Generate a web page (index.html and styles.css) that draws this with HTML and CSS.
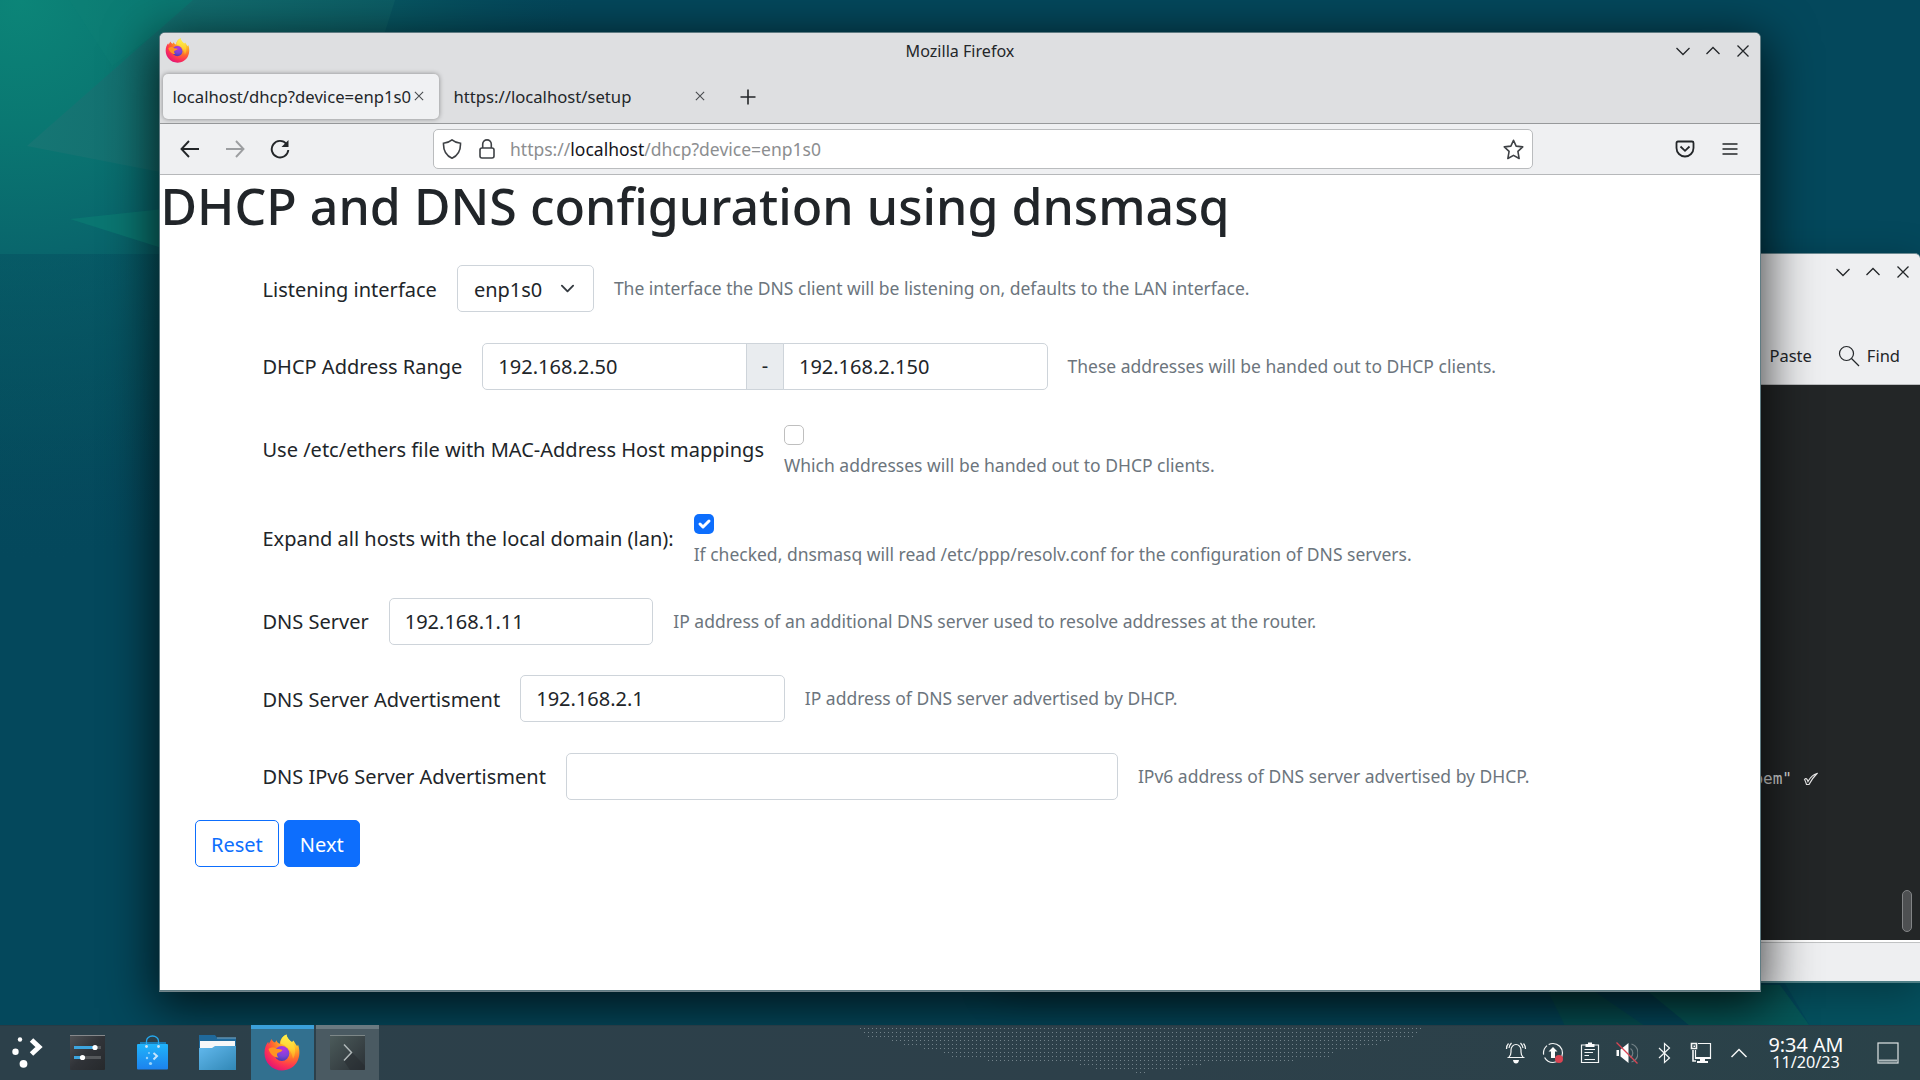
FILE: index.html
```html
<!DOCTYPE html>
<html lang="en">
<head>
<meta charset="utf-8">
<title>Mozilla Firefox</title>
<link rel="stylesheet" href="styles.css">
</head>
<body>
<svg width="0" height="0" class="defs">
  <defs>
    <radialGradient id="ffBody" cx="0.78" cy="0.12" r="1"><stop offset="0" stop-color="#fff44f"/><stop offset=".3" stop-color="#ffb625"/><stop offset=".55" stop-color="#ff6d2d"/><stop offset=".75" stop-color="#ff3750"/><stop offset="1" stop-color="#e0107a"/></radialGradient>
    <radialGradient id="ffGlobe" cx=".6" cy=".2" r=".8"><stop offset="0" stop-color="#b833e1"/><stop offset=".6" stop-color="#7a44d8"/><stop offset="1" stop-color="#4a3bb0"/></radialGradient>
    <linearGradient id="ffFlame" x1="0" y1="0" x2="0" y2="1"><stop offset="0" stop-color="#fff44f"/><stop offset=".6" stop-color="#ffd232"/><stop offset="1" stop-color="#ff9a1f"/></linearGradient>
    <symbol id="firefox" viewBox="0 0 36 37">
      <path fill="url(#ffBody)" d="M7.500 5C8.300 7 9.500 8 11 8.600L12.500 6.200C13 8 14 9.200 16 9.800C16 6 18 2.500 22.500 .5C23 4 25 6 28 8L29.500 6.500C31 9 32 10.500 33.200 12.300L34 10.500C36 16 36 22 33.500 27C30.500 33 24.500 36.500 18 36.500C8 36.500 .5 28.500 .5 19C.5 14 2 10.500 4.200 7.800L4.800 10Z"/>
      <path fill="url(#ffFlame)" d="M16.500 9.800C16.500 6 18 2.500 22.500 .5C23 4 25.500 6.200 28.500 9C32 13 32 20 29 25C28 19 25 12 16.500 9.800Z" opacity=".9"/>
      <circle cx="17.800" cy="19.500" r="7.500" fill="url(#ffGlobe)"/>
      <path fill="#ff9422" d="M4.500 15C8 12.500 11.500 13.500 13 15C15 15 17 15.200 18.500 16C17.500 18 15 18.200 13.500 19C12.500 20.500 13 22 14.500 23.500C10 24 6 20 4.500 15Z"/>
    </symbol>
    <symbol id="min" viewBox="0 0 16 16"><path d="M1.500 5 8 11.500 14.500 5"/></symbol>
    <symbol id="max" viewBox="0 0 16 16"><path d="M1.500 11 8 4.500 14.500 11"/></symbol>
    <symbol id="close" viewBox="0 0 16 16"><path d="M2.500 2.500 13.500 13.500M13.500 2.500 2.500 13.500"/></symbol>
  </defs>
</svg>

<main class="desktop">
  <svg class="wallpaper" viewBox="0 0 1920 1080" preserveAspectRatio="none">
    <defs>
      <radialGradient id="glow" gradientUnits="userSpaceOnUse" cx="20" cy="0" r="560"><stop offset="0" stop-color="#0c8578"/><stop offset=".22" stop-color="#0a7872"/><stop offset=".45" stop-color="#09666c"/><stop offset=".75" stop-color="#075561" stop-opacity=".7"/><stop offset="1" stop-color="#054a5d" stop-opacity="0"/></radialGradient>
      <linearGradient id="shade" x1="0" x2="0" y1="0" y2="1"><stop offset="0" stop-color="#04485c" stop-opacity=".38"/><stop offset="1" stop-color="#04485c" stop-opacity=".1"/></linearGradient>
      <linearGradient id="tri" x1="0" x2="1"><stop offset="0" stop-color="#187674"/><stop offset="1" stop-color="#0d5f66"/></linearGradient>
    </defs>
    <rect width="1920" height="1080" fill="#04485c"/>
    <rect width="1920" height="1080" fill="url(#glow)"/>
    <path d="M0 254H330V700H0Z" fill="url(#shade)"/>
    <path d="M60 -14 112 66 200 0 330 0 300 -14Z" fill="#0d8075" opacity=".35"/>
    <path d="M27 146 193 0H395L330 205Z" fill="url(#tri)" opacity=".85"/>
    <path d="M70 219 200 205V260Z" fill="#0a7671"/>
    <path d="M1545 985 1565 1026H1645L1585 985Z" fill="#065054"/>
    <path d="M1640 985 1690 1026H1810L1780 985Z" fill="#075859"/>
    <path d="M1780 975 1810 1026H1920V975Z" fill="#05505e"/>
  </svg>

  <section class="window terminal">
    <header class="term-title">
      <svg class="wbtn"><use href="#min"/></svg><svg class="wbtn"><use href="#max"/></svg><svg class="wbtn"><use href="#close"/></svg>
    </header>
    <div class="term-tools">
      <span class="paste">Paste</span>
      <svg class="search" viewBox="0 0 22 22"><circle cx="8.500" cy="8.500" r="7"/><path d="M13.500 13.500 21 21"/></svg>
      <span>Find</span>
    </div>
    <div class="term-body">
      <pre class="term-line">pem"<svg class="tick" viewBox="0 0 15 14"><path d="M1.500 7.500C3 5.500 4 7 5 9.500 7 6 10 2.500 14 1.500 10.500 5 8 8.500 6 12.500H3.500C3 11 2.500 9 1.500 7.500Z"/></svg></pre>
      <span class="term-thumb"></span>
    </div>
    <footer class="term-status"></footer>
  </section>

  <section class="window browser">
    <header class="titlebar">
      <svg class="app-icon"><use href="#firefox"/></svg>
      <span class="title">Mozilla Firefox</span>
      <div class="wbtns"><svg class="wbtn"><use href="#min"/></svg><svg class="wbtn"><use href="#max"/></svg><svg class="wbtn"><use href="#close"/></svg></div>
    </header>
    <nav class="tabs">
      <div class="tab active"><span>localhost/dhcp?device=enp1s0</span><svg class="tab-x"><use href="#close"/></svg></div>
      <div class="tab"><span>https://localhost/setup</span><svg class="tab-x"><use href="#close"/></svg></div>
      <svg class="new-tab" viewBox="0 0 16 16"><path d="M8 .5V15.500M.5 8H15.500"/></svg>
    </nav>
    <div class="toolbar">
      <svg class="nav-ic" viewBox="0 0 20 20"><path d="M19 10H1.500M9 2 1.500 10 9 18"/></svg>
      <svg class="nav-ic off" viewBox="0 0 20 20"><path d="M1 10H18.500M11 2 18.500 10 11 18"/></svg>
      <svg class="nav-ic" viewBox="0 0 20 20"><path d="M16.500 5A8.300 8.300 0 1 0 18.300 11"/><path class="solid" d="M18.500 1V8H11.500Z"/></svg>
      <div class="urlbar">
        <svg class="url-ic" viewBox="0 0 20 20"><path d="M10 .9C7.500 3 4.500 4 1.500 4.300 1.300 10 3 16 10 19.200 17 16 18.700 10 18.500 4.300 15.500 4 12.500 3 10 .9Z"/></svg>
        <svg class="url-ic lock" viewBox="0 0 16 20"><rect x="1" y="9" width="14" height="10" rx="2"/><path d="M3.700 9V5.200a4.300 4.300 0 0 1 8.600 0V9"/></svg>
        <span class="url">https://<b>localhost</b>/dhcp?device=enp1s0</span>
        <svg class="star" viewBox="0 0 20 20"><path d="M10 1.200 12.500 6.800 18.800 7.500 14.200 11.800 15.400 18.600 10 15.600 4.600 18.600 5.800 11.800 1.200 7.500 7.500 6.800Z"/></svg>
      </div>
      <svg class="pocket" viewBox="0 0 20 18"><path d="M3 1.500H17Q18.500 1.500 18.500 3V8A8.500 8.500 0 0 1 1.500 8V3Q1.500 1.500 3 1.500Z"/><path d="M5.500 6.500 10 10.800 14.500 6.500"/></svg>
      <svg class="menu" viewBox="0 0 16 14"><path d="M.5 2H15.500M.5 7H15.500M.5 12H15.500"/></svg>
    </div>

    <article class="page">
      <h1>DHCP and DNS configuration using dnsmasq</h1>
      <form class="form">
        <div class="row low-label"><label>Listening interface</label>
          <span class="control select">enp1s0<svg viewBox="0 0 16 16"><path d="M2 5 8 11 14 5"/></svg></span>
          <small>The interface the DNS client will be listening on, defaults to the LAN interface.</small></div>
        <div class="row"><label>DHCP Address Range</label>
          <div class="group"><input class="control first" value="192.168.2.50"><span class="addon">-</span><input class="control last" value="192.168.2.150"></div>
          <small>These addresses will be handed out to DHCP clients.</small></div>
        <div class="row tall"><label>Use /etc/ethers file with MAC-Address Host mappings</label>
          <div class="check"><span class="box"></span><small>Which addresses will be handed out to DHCP clients.</small></div></div>
        <div class="row tall"><label>Expand all hosts with the local domain (lan):</label>
          <div class="check"><span class="box on"><svg viewBox="0 0 20 20"><path d="m6 10 3 3 6-6"/></svg></span><small>If checked, dnsmasq will read /etc/ppp/resolv.conf for the configuration of DNS servers.</small></div></div>
        <div class="row server"><label>DNS Server</label><input class="control" value="192.168.1.11">
          <small>IP address of an additional DNS server used to resolve addresses at the router.</small></div>
        <div class="row advert low-label"><label>DNS Server Advertisment</label><input class="control" value="192.168.2.1">
          <small>IP address of DNS server advertised by DHCP.</small></div>
        <div class="row"><label>DNS IPv6 Server Advertisment</label><input class="control wide" value="">
          <small>IPv6 address of DNS server advertised by DHCP.</small></div>
      </form>
      <div class="actions"><button class="btn outline">Reset</button><button class="btn primary">Next</button></div>
    </article>
  </section>
</main>

<footer class="taskbar">
  <svg class="dots" viewBox="0 0 562 55">
    <path d="M0 3.500H562M4 7.500H558M8 11.500H554M32 15.500H530M44 19.500H518M64 23.500H498M84 27.500H474M92 31.500H470M128 35.500H434M220 39.500H342M236 43.500H322M276 47.500H285"/>
  </svg>
  <div class="launchers">
    <svg class="launch" viewBox="0 0 52 55"><g fill="#fff"><circle cx="20" cy="14.500" r="2.200"/><circle cx="15.500" cy="26.800" r="3.200"/><circle cx="23.500" cy="38.800" r="3.900"/></g><path d="M31.500 15 39 22 31.500 29" fill="none" stroke="#fff" stroke-width="5"/></svg>
    <svg class="launch" viewBox="4 0 52 55"><defs><linearGradient id="dk" x2="1" y2="1"><stop stop-color="#505357"/><stop offset=".5" stop-color="#303338"/><stop offset="1" stop-color="#26292c"/></linearGradient></defs><rect x="9" y="10" width="35" height="35" rx="1" fill="url(#dk)"/><path d="M9 10.500H44" stroke="#85888b"/><path d="M13 22.500H40M13 32.500H40" stroke="#55585b" stroke-width="3"/><path d="M13 22.500H33M13 32.500H22" stroke="#3da5df" stroke-width="3"/><circle cx="34" cy="22.500" r="2.600" fill="#fff"/><circle cx="21.500" cy="32.500" r="2.600" fill="#fff"/></svg>
    <svg class="launch" viewBox="1 0 52 55"><defs><linearGradient id="bag" x2="0" y2="1"><stop stop-color="#20b4fb"/><stop offset="1" stop-color="#1c82ee"/></linearGradient></defs><path d="M11 19V17H37V19" fill="#1a7bb5"/><rect x="8" y="19" width="31" height="30" rx="1" fill="none"/><rect x="8" y="19" width="31" height="25.500" rx="1" fill="url(#bag)"/><path d="M17.500 21V16A6 5 0 0 1 29.500 16V21" fill="none" stroke="#25a9ef" stroke-width="1.300"/><g fill="#cfe3ef"><circle cx="17.500" cy="21.500" r="1.400"/><circle cx="29.500" cy="21.500" r="1.400"/></g><g fill="#9ad4fa"><circle cx="20" cy="28" r=".9"/><circle cx="18" cy="33" r="1.200"/><circle cx="21.500" cy="38.500" r="1.600"/></g><path d="M24.500 28 28 31 24.500 34.500" fill="none" stroke="#c5e5fd" stroke-width="2"/></svg>
    <svg class="launch" viewBox="0 0 52 55"><defs><linearGradient id="fo" x2="1" y2="1"><stop stop-color="#62b9ee"/><stop offset="1" stop-color="#3187b5"/></linearGradient></defs><path d="M4 10H20L22 12.500H41V30H4Z" fill="#1f699b"/><path d="M22 13H41" stroke="#7aa4bd"/><rect x="5" y="16" width="35" height="9" fill="#f7f7f8"/><path d="M4 23H17L20 21H41V45H4Z" fill="url(#fo)"/></svg>
  </div>
  <div class="task focus"><svg class="ff"><use href="#firefox"/></svg></div>
  <div class="task"><svg class="kon" viewBox="0 0 35 35"><defs><linearGradient id="kn" x2="1" y2="1"><stop stop-color="#4c5b5b"/><stop offset="1" stop-color="#2b3136"/></linearGradient></defs><rect width="35" height="35" rx="1" fill="url(#kn)"/><path d="M0 .5H35" stroke="#7d8788"/><path d="M22 17.500 35 31V35H20L14 26Z" fill="#262b2e" opacity=".45"/><path d="M14 9.500 21.500 17.500 14 25.500" fill="none" stroke="#b0b8b9" stroke-width="1.500"/></svg></div>

  <div class="tray">
    <svg viewBox="0 0 22 22"><path d="M2.500 15.500H19.500M4 15Q6 13 6 10V8A5 5.500 0 0 1 16 8V10Q16 13 18 15M3.500 1.500Q1.500 3.500 1.500 7M6.500 1Q4.500 3 4 6M18.500 1.500Q20.500 3.500 20.500 7M15.500 1Q17.500 3 18 6"/><path class="w" d="M8 18H14Q13.500 21.500 11 21.500T8 18Z"/></svg>
    <svg viewBox="0 0 22 22"><circle cx="11" cy="11" r="9.500" stroke-dasharray="25 3 10 2"/><path class="w" d="M11 5 15.500 9.500H13V16H9V9.500H6.500Z"/><circle cx="17" cy="17" r="4" class="badge"/></svg>
    <svg viewBox="0 0 22 22"><path d="M2.500 3V20.500H19.500V3ZM5.500 7.500H16M5.500 10.500H14M5.500 13.500H10M5.500 17.500H16"/><path class="w" d="M6.500 5V2H9V.5H13V2H15.500V5Z"/></svg>
    <svg viewBox="0 0 22 22"><path class="w" d="M.5 8H3V14H.5ZM4.500 7.500 12.500 1V21L4.500 14.500Z"/><path opacity=".35" d="M14.500 6.500A5.500 5.500 0 0 1 14.500 15.500M15.500 2A9.500 9.500 0 0 1 15.500 20"/><path class="slash" d="M.5 .5 21.500 21.500"/></svg>
    <svg viewBox="0 0 22 22"><path d="M6 6 16.500 16 11.500 20.500V1.500L16.500 6 6 16"/></svg>
    <svg viewBox="0 0 22 22"><path d="M8 1.500H20.500V16.500H5.500V8"/><path d="M1.500 1.500H6.500V6.500H1.500ZM3 8V19H6" stroke-width="1.600"/><path class="w" d="M3.500 3.500H5V5H3.500ZM5 15H21V17H15V19H18V21H7V19H10V17H5Z"/></svg>
    <svg viewBox="0 0 22 22"><path d="M3.500 15 11 7.500 18.500 15" stroke-width="1.500"/></svg>
  </div>
  <div class="clock"><span class="time">9:34 AM</span><span class="date">11/20/23</span></div>
  <svg class="peek" viewBox="0 0 22 22"><rect x="1" y="1" width="20" height="20"/><path d="M2 18.500H20" class="bar"/></svg>
</footer>
</body>
</html>
```
FILE: styles.css
```css
* { box-sizing: border-box; }
body {
  margin: 0;
  width: 1920px;
  height: 1080px;
  overflow: hidden;
  display: flex;
  flex-direction: column;
  font-family: "Noto Sans", sans-serif;
  font-size: 17px;
  color: #232629;
}
svg { display: block; flex: none; }
.defs { position: absolute; }

/* Desktop */
.desktop { position: relative; height: 1025px; flex: none; overflow: hidden; }
.wallpaper { position: absolute; left: 0; top: 0; width: 1920px; height: 1080px; }
.window { position: absolute; display: flex; flex-direction: column; }
.wbtn { width: 16px; height: 16px; fill: none; stroke: #232629; stroke-width: 1.3; }

/* Terminal window behind the browser */
.terminal {
  left: 1000px; top: 253px; width: 920px; height: 730px;
  background: #eeeff1;
  border: 1px solid #6b8a92;
  border-bottom: 2px solid #4f7f86;
  border-right: 0;
  border-radius: 5px 5px 0 0;
  box-shadow: 0 10px 40px rgba(0, 0, 0, .3);
}
.term-title { height: 35px; display: flex; justify-content: flex-end; align-items: center; gap: 14px; padding-right: 9px; }
.term-tools { height: 96px; padding: 39px 20px 0 0; display: flex; justify-content: flex-end; align-items: center; line-height: 24px; font-size: 16.5px; border-bottom: 1px solid #bcbec0; }
.search { width: 22px; height: 22px; margin: 0 7px 0 26px; fill: none; stroke: #232629; stroke-width: 1.2; }
.term-body { height: 555px; background: #232627; display: flex; flex-direction: column; align-items: flex-end; justify-content: space-between; }
.term-line { margin: 381px 102px 0 0; display: flex; align-items: center; gap: 11px; font: 16px/26px "DejaVu Sans Mono", monospace; color: #dcdedf; }
.tick { width: 15px; height: 14px; fill: none; stroke: #e8e8e8; stroke-width: 1.2; }
.term-thumb { width: 10px; height: 42px; margin: 0 8px 8px 0; border: 1px solid #828486; border-radius: 5px; background: #4e5052; }
.term-status { flex: 1; border-top: 2px solid #fff; box-shadow: inset 0 1px 0 #c0c2c3; }

/* Browser window */
.browser {
  left: 160px; top: 33px; width: 1600px; height: 957px;
  background: #fff;
  border-radius: 5px 5px 0 0;
  box-shadow: 0 0 0 1px #5f7b82, 0 1px 0 1px #74858a, 0 12px 50px 6px rgba(0, 0, 0, .72);
}
.titlebar { height: 36px; background: #dedfe1; border-radius: 5px 5px 0 0; display: grid; grid-template-columns: 1fr auto 1fr; align-items: center; padding: 0 5px; }
.app-icon { width: 25px; height: 25px; margin-top: -2px; }
.title { font-size: 16.1px; }
.wbtns { display: flex; gap: 14px; justify-content: flex-end; margin: -1px 4.500px 0 0; }
.tabs { height: 55px; background: #dedfe1; border-bottom: 1px solid #97999b; display: flex; align-items: center; padding: 0 3px 0 3px; }
.tab { width: 276px; height: 45px; margin-right: 5px; padding: 0 14px 0 9.500px; border-radius: 5px; display: flex; align-items: center; justify-content: space-between; white-space: nowrap; font-size: 16.67px; }
.tab.active { background: #f0f1f3; box-shadow: 0 0 5px rgba(0, 0, 0, .4); }
.tab-x { width: 12px; height: 12px; fill: none; stroke: #4b4e51; stroke-width: 1.5; }
.new-tab { width: 16px; height: 16px; margin: 1px 0 0 14.500px; fill: none; stroke: #232629; stroke-width: 1.6; }
.toolbar { height: 51px; background: #eff0f2; border-bottom: 1px solid #b6b8ba; display: flex; align-items: center; padding-left: 20px; }
.nav-ic { width: 20px; height: 20px; margin-right: 25px; fill: none; stroke: #232629; stroke-width: 1.9; }
.nav-ic .solid { fill: #232629; stroke: none; }
.off { opacity: .4; }
.urlbar { width: 1100px; height: 40px; margin-left: 118px; border: 1px solid #babcbe; border-radius: 5px; background: #fff; display: flex; align-items: center; padding: 0 8px; }
.url-ic { width: 20px; height: 20px; fill: none; stroke: #3e4145; stroke-width: 1.6; }
.lock { width: 16px; margin: 0 15px 0 17px; }
.url { flex: 1; font-size: 17.5px; color: #8c8e90; }
.url b { font-weight: 400; color: #15141a; }
.star { width: 21px; height: 21px; fill: none; stroke: #3e4145; stroke-width: 1.5; stroke-linejoin: round; }
.pocket { width: 20px; height: 18px; margin-left: 142px; fill: none; stroke: #232629; stroke-width: 1.8; }
.menu { width: 16px; height: 14px; margin-left: 27px; fill: none; stroke: #232629; stroke-width: 1.4; }

/* Page */
.page { flex: 1; font-size: 20px; line-height: 30px; color: #212529; }
h1 { margin: 0 0 30px; padding: 1px 0 0 .5px; font-size: 50px; line-height: 60px; font-weight: 500; letter-spacing: .03px; white-space: nowrap; height: 60px; }
.form { padding-left: 102.5px; }
.row { height: 47px; margin-bottom: 30.5px; display: flex; align-items: center; gap: 20px; white-space: nowrap; }
.row label { padding-top: 1px; }
.row.low-label label { padding-top: 3px; }
.row.tall { height: 58.5px; }
.row.server { margin-bottom: 30px; }
.row.advert { margin-bottom: 31px; }
small { font-size: 17.5px; line-height: 26px; color: #6c757d; }
.row > small { margin-top: -1px; }
.control { width: 264.6px; height: 47px; padding: 0 15px; border: 1px solid #ced4da; border-radius: 5px; background: #fff; font: inherit; color: inherit; outline: 0; }
.wide { width: 552px; }
.select { width: 137px; padding: 2px 17.500px 0 16px; display: flex; align-items: center; justify-content: space-between; }
.select svg { width: 15px; height: 15px; margin-top: -3px; fill: none; stroke: #343a40; stroke-width: 2; stroke-linecap: round; stroke-linejoin: round; }
.group { display: flex; }
.first { border-radius: 5px 0 0 5px; }
.last { border-radius: 0 5px 5px 0; }
.addon { width: 38px; margin: 0 -1px; border: 1px solid #ced4da; background: #e9ecef; display: flex; align-items: center; justify-content: center; }
.check { align-self: flex-start; display: flex; flex-direction: column; gap: 7px; padding-top: 5px; }
.box { width: 20px; height: 20px; border: 1px solid #bfbfbf; border-radius: 5px; }
.box.on { border: 0; background: #0d6efd; }
.box path { fill: none; stroke: #fff; stroke-width: 3; stroke-linecap: round; stroke-linejoin: round; }
.actions { display: flex; gap: 5px; padding-left: 35px; margin-top: -10.5px; }
.btn { height: 47px; padding: 2px 15px 0; border: 1px solid #0d6efd; border-radius: 5px; font: inherit; }
.outline { background: #fff; color: #0d6efd; }
.primary { background: #0d6efd; color: #fff; }

/* Panel */
.taskbar { position: relative; height: 55px; flex: none; display: flex; align-items: center; background: linear-gradient(90deg, #2c404a, #2d404a 60%, #2a4249); box-shadow: inset 0 1px 0 #273b45; }
.dots { position: absolute; left: 860px; top: 0; width: 562px; height: 55px; }
.dots path { stroke: #72828a; stroke-width: 1; stroke-dasharray: 1 3; }
.launchers { display: flex; gap: 13px; width: 251px; }
.launch { width: 52px; height: 55px; }
.task { width: 63px; height: 55px; margin-right: 2px; border-top: 4px solid #6b7a81; background: #4a5a62; display: flex; align-items: center; justify-content: center; }
.task.focus { border-color: #3ba0da; background: #32708f; }
.ff { width: 36px; height: 37px; margin: -5px 0 0 -1px; }
.kon { width: 35px; height: 35px; margin-top: -4px; }
.tray { display: flex; margin-left: auto; gap: 15.1px; }
.tray svg { width: 22px; height: 22px; fill: none; stroke: #f4f6f6; stroke-width: 1.2; }
.tray .w { fill: #fcfcfc; stroke: none; }
.tray .badge { fill: #da4453; stroke: none; }
.tray .slash { stroke: #da4453; }
.clock { width: 90px; margin-left: 11.5px; display: flex; flex-direction: column; align-items: center; color: #fcfcfc; white-space: nowrap; }
.time { font-size: 19.8px; line-height: 20px; }
.date { font-size: 16.2px; line-height: 15.5px; }
.peek { width: 22px; height: 22px; margin: 0 21.500px 0 25.500px; fill: none; stroke: #dfe4e5; stroke-width: 1.2; }
.peek .bar { stroke: #aeb9bc; stroke-width: 2; }
```
